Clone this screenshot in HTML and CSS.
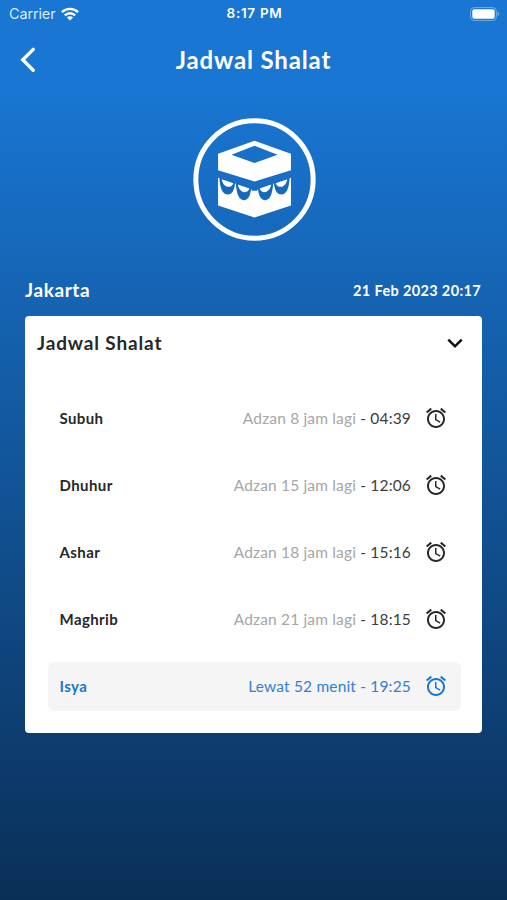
FILE: index.html
```html
<!DOCTYPE html>
<html lang="id">
<head>
<meta charset="utf-8">
<meta name="viewport" content="width=device-width, initial-scale=1">
<title>Jadwal Shalat</title>
<link rel="stylesheet" href="styles.css">
</head>
<body>
<svg class="defs" width="0" height="0" aria-hidden="true">
  <symbol id="alarm" viewBox="0 0 24 24">
    <path fill="currentColor" d="M22 5.72l-4.6-3.86-1.29 1.53 4.6 3.86L22 5.72zM7.88 3.39L6.6 1.86 2 5.71l1.29 1.53 4.59-3.85zM12.5 8H11v6l4.75 2.85.75-1.23-4-2.37V8zM12 4c-4.97 0-9 4.03-9 9s4.02 9 9 9c4.97 0 9-4.03 9-9s-4.03-9-9-9zm0 16c-3.87 0-7-3.13-7-7s3.13-7 7-7 7 3.13 7 7-3.13 7-7 7z"/>
  </symbol>
</svg>
<main class="screen">
  <div class="status">
    <div class="carrier"><span class="carrier-name">Carrier</span>
      <svg class="wifi" viewBox="0 0 18 14" fill="none" stroke="#fff" stroke-width="2.4"><path d="M.9 5.2C5.4.7 12.6.7 17.1 5.2"/><path d="M3.8 8.4c2.9-2.9 7.5-2.9 10.4 0"/><path fill="#fff" stroke="none" d="M9 13.6 5.9 10.5c1.7-1.6 4.5-1.6 6.2 0z"/></svg>
    </div>
    <div class="clock">8:17 PM</div>
    <svg class="battery" viewBox="0 0 30 14"><rect x=".6" y=".6" width="25.8" height="12.8" rx="3.6" fill="none" stroke="#75ade4" stroke-width="1"/><rect x="2.3" y="2.3" width="22.4" height="9.4" rx="2" fill="#fff"/><path d="M27.6 4.8c2.2.8 2.2 3.6 0 4.4z" fill="#75ade4"/></svg>
  </div>
  <header class="header">
    <svg class="back" viewBox="0 0 16 26" fill="none" stroke="#fff" stroke-width="3.4" stroke-linecap="round"><path d="M13.2 2.4 2.8 12.8l10.4 10.4"/></svg>
    <h1 class="title">Jadwal Shalat</h1>
  </header>
  <svg class="kaaba" viewBox="26 24 368 368">
    <circle cx="210" cy="208" r="175.5" fill="none" stroke="#fff" stroke-width="15"/>
    <path fill="#fff" fill-rule="evenodd" d="M210 92 319 131v49L210 214 101 180v-49zM210 107 141 134l69 25 69-25z"/>
    <path fill="#fff" d="M101 203 210 239 319 203v83L210 322 101 286z"/>
    <g class="drape">
      <path d="M105 202c1 33 10 51 25 51 13 0 20-13 22-36z"/>
      <path d="M154 218c2 34 10 52 24 52 13 0 20-13 22-37z"/>
      <path d="M315 202c-1 33-10 51-25 51-13 0-20-13-22-36z"/>
      <path d="M266 218c-2 34-10 52-24 52-13 0-20-13-22-37z"/>
      <path d="M196 232 210 237l14-5-7 10h-14z"/>
    </g>
    <g fill="#fff">
      <path d="M112 207c4 26 28 30 35 12z"/>
      <path d="M160 223c5 26 28 30 35 12z"/>
      <path d="M308 207c-4 26-28 30-35 12z"/>
      <path d="M260 223c-5 26-28 30-35 12z"/>
    </g>
  </svg>
  <div class="place"><span class="city">Jakarta</span><span class="date">21 Feb 2023 20:17</span></div>
  <section class="card">
    <div class="card-head">
      <h2 class="card-title">Jadwal Shalat</h2>
      <svg class="chevron" viewBox="0 0 16 11" fill="none" stroke="#111" stroke-width="2.5"><path d="M1.3 1.6 8 8.3l6.7-6.7"/></svg>
    </div>
    <ul class="times">
      <li class="row"><span class="name">Subuh</span><span class="info"><span class="left">Adzan 8 jam lagi</span> - 04:39</span><svg class="alarm"><use href="#alarm"/></svg></li>
      <li class="row"><span class="name">Dhuhur</span><span class="info"><span class="left">Adzan 15 jam lagi</span> - 12:06</span><svg class="alarm"><use href="#alarm"/></svg></li>
      <li class="row"><span class="name">Ashar</span><span class="info"><span class="left">Adzan 18 jam lagi</span> - 15:16</span><svg class="alarm"><use href="#alarm"/></svg></li>
      <li class="row"><span class="name">Maghrib</span><span class="info"><span class="left">Adzan 21 jam lagi</span> - 18:15</span><svg class="alarm"><use href="#alarm"/></svg></li>
      <li class="row active"><span class="name">Isya</span><span class="info">Lewat 52 menit - 19:25</span><svg class="alarm"><use href="#alarm"/></svg></li>
    </ul>
  </section>
</main>
</body>
</html>
```
FILE: styles.css
```css
* { box-sizing: border-box; margin: 0; padding: 0; }
body { font-family: Lato, "Noto Sans", sans-serif; color: #282828; }
svg { display: block; flex: none; }
.defs { position: absolute; }
.screen {
  height: 900px;
  overflow: hidden;
  background: linear-gradient(#1976d2 0, #1976d2 88px, #0a2f57 900px);
}
.status {
  display: grid;
  grid-template-columns: 1fr auto 1fr;
  align-items: center;
  height: 27px;
  padding: 0 7px 0 9px;
  color: #fff;
  font: 15px/27px Inter, sans-serif;
}
.carrier { display: flex; align-items: center; gap: 6px; }
.carrier-name { color: #d9eafa; font-size: 14.5px; letter-spacing: -.15px; }
.wifi { width: 18px; height: 14px; }
.clock { font-size: 13.5px; font-weight: 600; letter-spacing: .7px; white-space: nowrap; }
.battery { width: 30px; height: 14px; justify-self: end; }
.header {
  display: grid;
  grid-template-columns: 40px 1fr 40px;
  align-items: center;
  height: 65px;
  padding: 0 20px;
}
.back { width: 16px; height: 26px; }
.title { color: #fff; font-size: 24px; line-height: 30px; text-align: center; letter-spacing: .85px; }
.kaaba { width: 123px; height: 123px; margin: 26px auto 0 192.5px; }
.drape { fill: #1769bd; }
.place {
  display: flex;
  justify-content: space-between;
  align-items: center;
  height: 24px;
  margin: 36px 26px 0 25px;
  color: #fff;
  font-weight: 700;
}
.city { font-size: 19px; letter-spacing: .6px; }
.date { padding-top: 2px; font-size: 14.5px; letter-spacing: .35px; }
.card { height: 417px; margin: 15px 25px 0; background: #fff; border-radius: 4px; }
.card-head {
  display: flex;
  justify-content: space-between;
  align-items: center;
  height: 54px;
  padding: 0 19px 0 12px;
}
.card-title { padding-bottom: 1px; font-size: 19px; letter-spacing: .85px; }
.chevron { width: 16px; height: 11px; }
.times { display: grid; gap: 18.2px; list-style: none; margin: 23px 21px 0 23px; }
.row { display: flex; align-items: center; height: 49px; padding: 0 13px 0 11.5px; border-radius: 6px; }
.name { flex: 1; font-size: 15px; font-weight: 700; letter-spacing: .4px; }
.info { font-size: 15.5px; color: #3c3c3c; letter-spacing: .17px; }
.left { color: #a6a6a6; }
.alarm { width: 24px; height: 24px; margin-left: 13px; }
.active { background: #f5f5f5; color: #1976d2; }
.active .info { color: #327fd4; }
```
